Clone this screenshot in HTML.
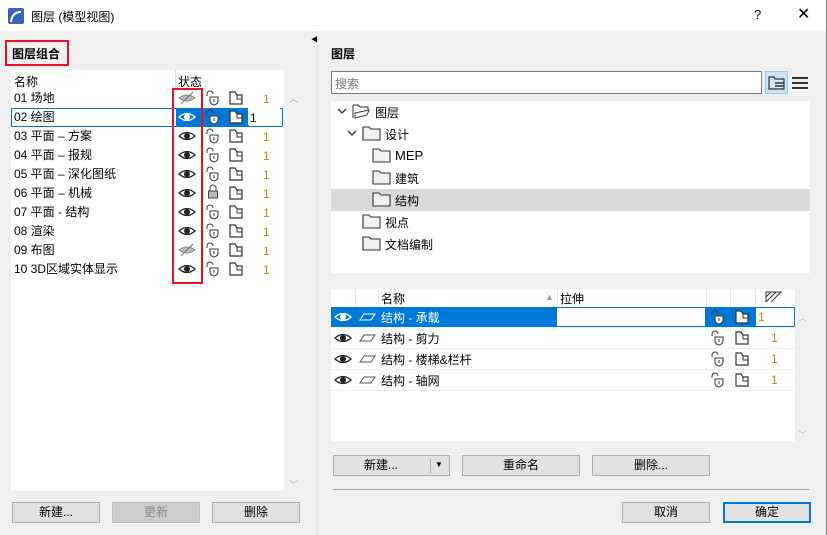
<!DOCTYPE html>
<html><head><meta charset="utf-8"><style>
*{box-sizing:border-box;margin:0;padding:0}
body{width:827px;height:535px;background:#f0f0f0;font-family:"Liberation Sans","Noto Sans CJK SC",sans-serif;font-size:12px;color:#000;position:relative;overflow:hidden}
.a{position:absolute}
.btn{position:absolute;background:#e1e1e1;border:1px solid #adadad;text-align:center;line-height:18px;font-size:12px}
.row{position:absolute;left:0;height:19px;line-height:19px;width:272px}
</style></head><body>
<div class="a" style="left:0;top:0;width:827px;height:31px;background:#fff"></div>
<svg class="a" style="left:8px;top:8px" width="16" height="16"><rect width="16" height="16" rx="2" fill="#3a64b4"/><path d="M3 14 Q4 4 13 4" stroke="#fff" stroke-width="2" fill="none"/></svg>
<div class="a" style="left:31px;top:8px;font-size:12px">图层 (模型视图)</div>
<div class="a" style="left:754px;top:7px;font-size:13px">?</div>
<div class="a" style="left:797px;top:4px;font-size:16px">✕</div>
<div class="a" style="left:826px;top:0;width:1px;height:535px;background:#888"></div>

<div class="a" style="left:5px;top:40px;width:64px;height:26px;border:2px solid #e81123"></div>
<div class="a" style="left:12px;top:45px;font-weight:bold">图层组合</div>

<div class="a" style="left:11px;top:70px;width:273px;height:421px;background:#fff"></div>
<div class="a" style="left:285px;top:70px;width:15px;height:421px;background:#f0f0f0"></div>
<div class="a" style="left:289px;top:92px;color:#aaa;font-size:9px">︿</div>
<div class="a" style="left:289px;top:478px;color:#aaa;font-size:9px">﹀</div>
<div class="a" style="left:175px;top:70px;width:1px;height:18px;background:#ddd"></div>
<div class="a" style="left:14px;top:73px">名称</div>
<div class="a" style="left:178px;top:73px">状态</div>

<div class="a" style="left:11px;top:89px">
<div class="row" style="top:0"><span class="a" style="left:3px">01 场地</span></div>
<div class="row" style="top:19px;border:1px solid #0078d7;line-height:17px"><span class="a" style="left:2px">02 绘图</span><span class="a" style="left:164px;top:0;width:73px;height:17px;background:#0078d7"></span><span class="a" style="left:240px;top:0">1</span></div>
<div class="row" style="top:38px"><span class="a" style="left:3px">03 平面 – 方案</span></div>
<div class="row" style="top:57px"><span class="a" style="left:3px">04 平面 – 报规</span></div>
<div class="row" style="top:76px"><span class="a" style="left:3px">05 平面 – 深化图纸</span></div>
<div class="row" style="top:95px"><span class="a" style="left:3px">06 平面 – 机械</span></div>
<div class="row" style="top:114px"><span class="a" style="left:3px">07 平面 - 结构</span></div>
<div class="row" style="top:133px"><span class="a" style="left:3px">08 渲染</span></div>
<div class="row" style="top:152px"><span class="a" style="left:3px">09 布图</span></div>
<div class="row" style="top:171px"><span class="a" style="left:3px">10 3D区域实体显示</span></div>
</div>
<svg class="a" style="left:170px;top:88px" width="110" height="192">
<defs>
<g id="eye"><path d="M-8 0 Q0 -7 8 0 Q0 7 -8 0Z" fill="none" stroke="#222" stroke-width="1.3"/><circle r="3" fill="#222"/></g>
<g id="eyew"><path d="M-8 0 Q0 -7 8 0 Q0 7 -8 0Z" fill="none" stroke="#fff" stroke-width="1.3"/><circle r="3" fill="#fff"/></g>
<g id="eyeh"><path d="M-8 0 Q0 -6 8 0 Q0 6 -8 0Z" fill="#bbb" stroke="#888"/><path d="M-6 6 L6 -6" stroke="#777"/></g>
<g id="lk"><path d="M-6 -2 V-4 A3 3 0 0 1 0 -4" fill="none" stroke="#333"/><path d="M-3 -1 H5 V3 Q5 6 1 7 Q-3 6 -3 3Z" fill="#fff" stroke="#333"/><path d="M1 1 V4" stroke="#333"/></g>
<g id="dc"><path d="M-6 -6 H-1 L1 -3 H6 V6 H-6Z" fill="#fff" stroke="#333" stroke-width="1.2"/><path d="M1 -3 V1 H6" fill="none" stroke="#333"/></g>
</defs>
<use href="#eyeh" x="17" y="10"/>
<use href="#eyew" x="17" y="29"/>
<g><use href="#eye" x="17" y="48"/><use href="#eye" x="17" y="67"/><use href="#eye" x="17" y="86"/><use href="#eye" x="17" y="105"/><use href="#eye" x="17" y="124"/><use href="#eye" x="17" y="143"/><use href="#eyeh" x="17" y="162"/><use href="#eye" x="17" y="181"/></g>
<g><use href="#lk" x="43" y="10"/><use href="#lk" x="43" y="29"/><use href="#lk" x="43" y="48"/><use href="#lk" x="43" y="67"/><use href="#lk" x="43" y="86"/><path d="M40 103 V100 A3 3 0 0 1 46 100 V103" fill="none" stroke="#444"/><rect x="38.5" y="103" width="9" height="7" fill="#bbb" stroke="#444"/><use href="#lk" x="43" y="124"/><use href="#lk" x="43" y="143"/><use href="#lk" x="43" y="162"/><use href="#lk" x="43" y="181"/></g>
<g><use href="#dc" x="66" y="10"/><use href="#dc" x="66" y="29"/><use href="#dc" x="66" y="48"/><use href="#dc" x="66" y="67"/><use href="#dc" x="66" y="86"/><use href="#dc" x="66" y="105"/><use href="#dc" x="66" y="124"/><use href="#dc" x="66" y="143"/><use href="#dc" x="66" y="162"/><use href="#dc" x="66" y="181"/></g>
<rect x="78" y="20" width="33" height="17" fill="#fff"/>
<g fill="#b8860b" font-size="12" font-family="Liberation Sans"><text x="93" y="15">1</text><text x="93" y="53">1</text><text x="93" y="72">1</text><text x="93" y="91">1</text><text x="93" y="110">1</text><text x="93" y="129">1</text><text x="93" y="148">1</text><text x="93" y="167">1</text><text x="93" y="186">1</text></g>
<text x="80" y="34" font-size="12" font-family="Liberation Sans">1</text>
</svg>
<div class="a" style="left:172px;top:88px;width:31px;height:196px;border:2px solid #e81123"></div>

<div class="btn" style="left:12px;top:502px;width:88px;height:21px">新建...</div>
<div class="btn" style="left:112px;top:502px;width:88px;height:21px;background:#ccc;border-color:#bfbfbf;color:#888">更新</div>
<div class="btn" style="left:212px;top:502px;width:88px;height:21px">删除</div>

<div class="a" style="left:311px;top:34px;font-size:8px">◀</div>
<div class="a" style="left:317px;top:31px;width:1px;height:504px;background:#e5e5e5"></div>

<div class="a" style="left:331px;top:45px;font-weight:bold">图层</div>
<div class="a" style="left:331px;top:71px;width:431px;height:23px;background:#fff;border:1px solid #7a7a7a;color:#777;padding:3px 3px">搜索</div>
<div class="a" style="left:765px;top:71px;width:23px;height:23px;background:#cce4f7;border:1px solid #99c9ef"></div>
<svg class="a" style="left:767px;top:74px" width="44" height="18"><path d="M2 3 H7 L8 5 H17 V15 H2Z" fill="none" stroke="#333" stroke-width="1.2"/><path d="M8 9 H17 M8 12 H17" stroke="#333" stroke-width="1.5"/><path d="M25 4 H41 M25 9 H41 M25 14 H41" stroke="#333" stroke-width="2"/></svg>

<div class="a" style="left:331px;top:101px;width:479px;height:172px;background:#fff"></div>
<div class="a" style="left:331px;top:189px;width:479px;height:22px;background:#d9d9d9"></div>
<svg class="a" style="left:331px;top:101px" width="100" height="172">
<defs><path id="fd" d="M0 -6 H6 L8 -4 H17 V7 H0Z" fill="#f0f0f0" stroke="#333" stroke-width="1.1"/></defs>
<path d="M7 8 L11 12 L15 8" fill="none" stroke="#333" stroke-width="1.3"/>
<path d="M22 4 H27 L29 6 H37 V9" fill="none" stroke="#333"/><path d="M22 4 V17 M24 12 L38 9 L36 14 L24 17Z" fill="#fff" stroke="#333"/>
<path d="M17 30 L21 34 L25 30" fill="none" stroke="#333" stroke-width="1.3"/>
<use href="#fd" x="32" y="32"/>
<use href="#fd" x="42" y="54"/><use href="#fd" x="42" y="76"/><use href="#fd" x="42" y="98"/>
<use href="#fd" x="32" y="120"/><use href="#fd" x="32" y="142"/>
</svg>
<div class="a" style="left:375px;top:104px">图层</div>
<div class="a" style="left:385px;top:126px">设计</div>
<div class="a" style="left:395px;top:148px;font-size:13px">MEP</div>
<div class="a" style="left:395px;top:170px">建筑</div>
<div class="a" style="left:395px;top:192px">结构</div>
<div class="a" style="left:385px;top:214px">视点</div>
<div class="a" style="left:385px;top:236px">文档编制</div>

<div class="a" style="left:331px;top:289px;width:464px;height:152px;background:#fff"></div>
<div class="a" style="left:795px;top:289px;width:15px;height:152px;background:#f0f0f0"></div>
<div class="a" style="left:798px;top:311px;color:#bbb;font-size:9px">︿</div>
<div class="a" style="left:798px;top:428px;color:#bbb;font-size:9px">﹀</div>
<div class="a" style="left:331px;top:289px;width:464px;height:18px">
<span class="a" style="left:24px;top:0;width:1px;height:18px;background:#e5e5e5"></span>
<span class="a" style="left:47px;top:0;width:1px;height:18px;background:#e5e5e5"></span>
<span class="a" style="left:226px;top:0;width:1px;height:18px;background:#e5e5e5"></span>
<span class="a" style="left:375px;top:0;width:1px;height:18px;background:#e5e5e5"></span>
<span class="a" style="left:399px;top:0;width:1px;height:18px;background:#e5e5e5"></span>
<span class="a" style="left:424px;top:0;width:1px;height:18px;background:#e5e5e5"></span>
<span class="a" style="left:50px;top:1px">名称</span>
<span class="a" style="left:214px;top:3px;color:#999;font-size:9px">▲</span>
<span class="a" style="left:229px;top:1px">拉伸</span>
<svg class="a" style="left:434px;top:2px" width="18" height="12"><path d="M1 11 V1 H17 M1 6 L6 1 M1 11 L11 1 M6 11 L16 1" stroke="#333" fill="none"/></svg>
</div>
<div class="a" style="left:331px;top:307px;width:464px;height:20px;background:#0078d7"></div>
<div class="a" style="left:557px;top:308px;width:148px;height:18px;background:#fff"></div>
<div class="a" style="left:756px;top:308px;width:38px;height:18px;background:#fff"></div>
<div class="a" style="left:331px;top:348px;width:464px;height:1px;background:#eee"></div>
<div class="a" style="left:331px;top:369px;width:464px;height:1px;background:#eee"></div>
<div class="a" style="left:331px;top:390px;width:464px;height:1px;background:#eee"></div>
<div class="a" style="left:331px;top:327px;width:464px;height:1px;background:#eee"></div>
<svg class="a" style="left:331px;top:307px" width="464" height="84">
<defs><path id="sl" d="M-7 4 L-3 -2 H8 L4 4Z" fill="none" stroke="#555"/><path id="slw" d="M-7 4 L-3 -2 H8 L4 4Z" fill="none" stroke="#fff"/></defs>
<use href="#eyew" x="12" y="10"/><use href="#eye" x="12" y="31"/><use href="#eye" x="12" y="52"/><use href="#eye" x="12" y="73"/>
<use href="#slw" x="36" y="9"/><use href="#sl" x="36" y="30"/><use href="#sl" x="36" y="51"/><use href="#sl" x="36" y="72"/>
<g><use href="#lk" x="387" y="10"/><use href="#lk" x="387" y="31"/><use href="#lk" x="387" y="52"/><use href="#lk" x="387" y="73"/></g>
<g><use href="#dc" x="411" y="10"/><use href="#dc" x="411" y="31"/><use href="#dc" x="411" y="52"/><use href="#dc" x="411" y="73"/></g>
<g fill="#b8860b" font-size="12" font-family="Liberation Sans"><text x="440" y="35">1</text><text x="440" y="56">1</text><text x="440" y="77">1</text></g>
<text x="427" y="14" font-size="12" font-family="Liberation Sans" fill="#b8860b">1</text>
</svg>
<div class="a" style="left:381px;top:309px;color:#fff">结构 - 承载</div>
<div class="a" style="left:381px;top:330px">结构 - 剪力</div>
<div class="a" style="left:381px;top:351px">结构 - 楼梯&amp;栏杆</div>
<div class="a" style="left:381px;top:372px">结构 - 轴网</div>

<div class="btn" style="left:333px;top:455px;width:117px;height:21px;text-align:left;padding-left:30px">新建...<span class="a" style="left:96px;top:3px;width:1px;height:14px;background:#aaa"></span><span class="a" style="left:101px;top:0;font-size:8px">▼</span></div>
<div class="btn" style="left:462px;top:455px;width:118px;height:21px">重命名</div>
<div class="btn" style="left:592px;top:455px;width:118px;height:21px">删除...</div>
<div class="a" style="left:333px;top:489px;width:476px;height:1px;background:#a0a0a0"></div>
<div class="btn" style="left:622px;top:502px;width:88px;height:21px">取消</div>
<div class="btn" style="left:723px;top:502px;width:88px;height:21px;border:2px solid #0078d7;line-height:17px">确定</div>
</body></html>
